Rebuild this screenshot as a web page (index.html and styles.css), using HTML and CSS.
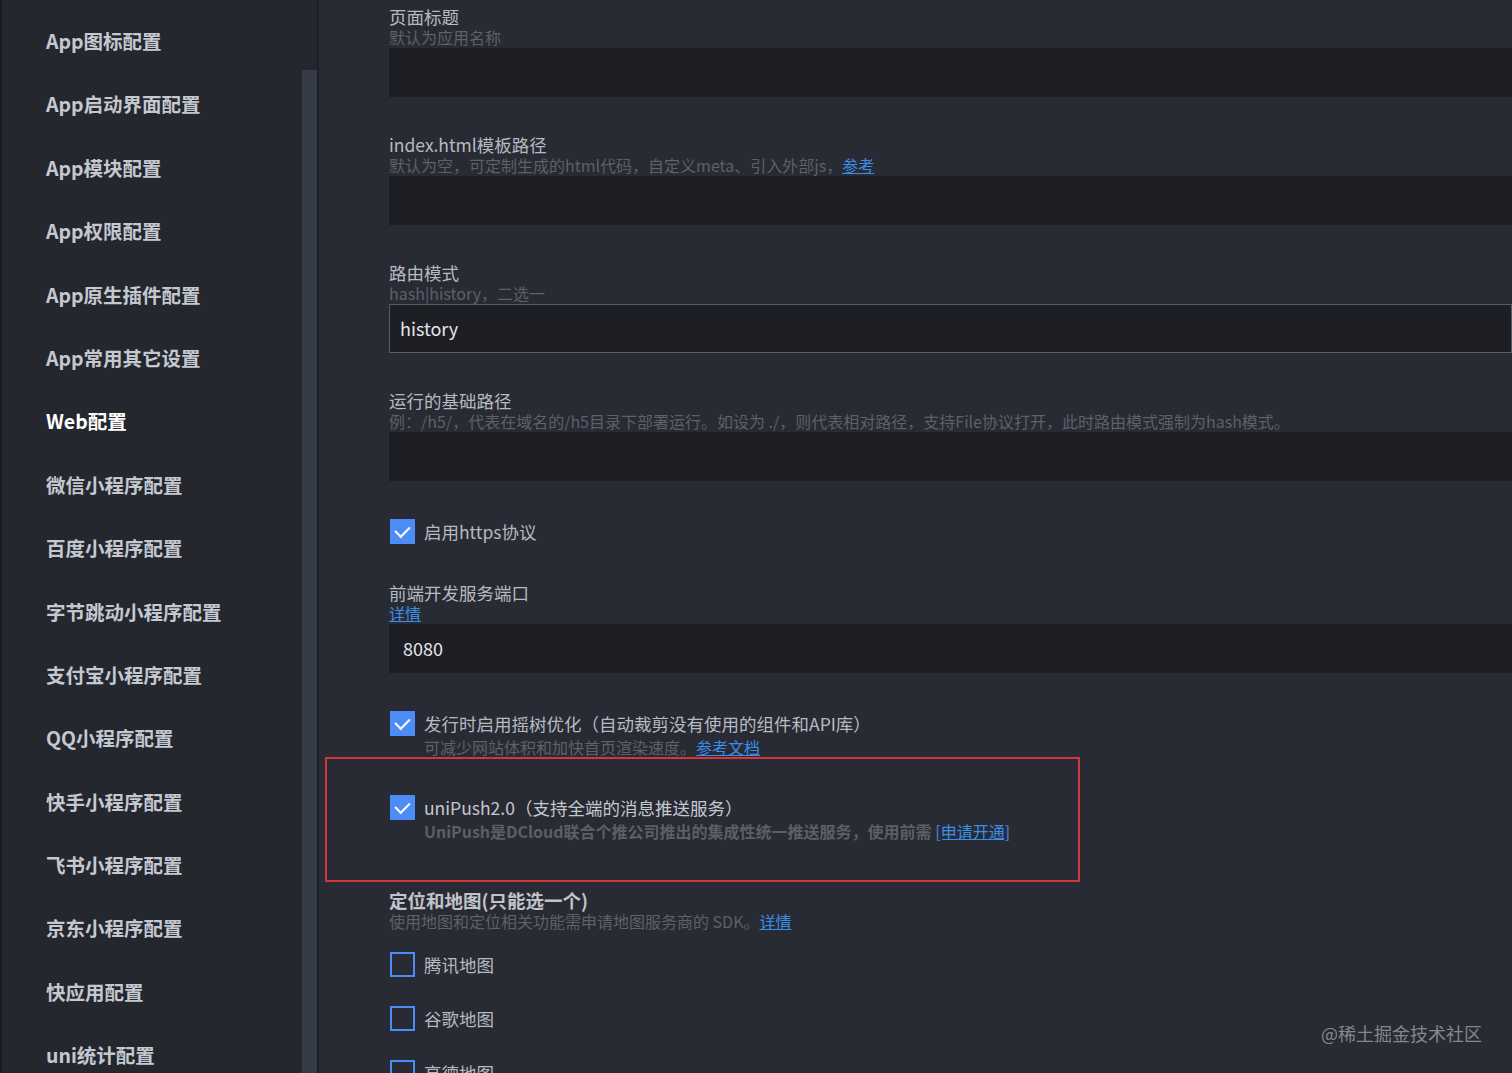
FILE: index.html
```html
<!DOCTYPE html>
<html>

<head>
    <meta charset="utf-8" />
    <title>manifest.json - Web配置</title>
    <link rel="stylesheet" href="styles.css">
</head>

<body>
    <div class="sidebar">
        <ul class="menu">
            <li>App图标配置</li>
            <li>App启动界面配置</li>
            <li>App模块配置</li>
            <li>App权限配置</li>
            <li>App原生插件配置</li>
            <li>App常用其它设置</li>
            <li class="active">Web配置</li>
            <li>微信小程序配置</li>
            <li>百度小程序配置</li>
            <li>字节跳动小程序配置</li>
            <li>支付宝小程序配置</li>
            <li>QQ小程序配置</li>
            <li>快手小程序配置</li>
            <li>飞书小程序配置</li>
            <li>京东小程序配置</li>
            <li>快应用配置</li>
            <li>uni统计配置</li>
        </ul>
        <div class="scroll-track">
            <div class="scroll-thumb"></div>
        </div>
    </div>

    <div class="main">
        <div class="field">
            <div class="label">页面标题</div>
            <div class="hint">默认为应用名称</div>
            <div class="input"></div>
        </div>

        <div class="field">
            <div class="label">index.html模板路径</div>
            <div class="hint">默认为空，可定制生成的html代码，自定义meta、引入外部js，<a href="#">参考</a></div>
            <div class="input"></div>
        </div>

        <div class="field">
            <div class="label">路由模式</div>
            <div class="hint">hash|history，二选一</div>
            <div class="input focused">history</div>
        </div>

        <div class="field">
            <div class="label">运行的基础路径</div>
            <div class="hint">例：/h5/，代表在域名的/h5目录下部署运行。如设为 ./，则代表相对路径，支持File协议打开，此时路由模式强制为hash模式。</div>
            <div class="input"></div>
        </div>

        <div class="check-row">
            <span class="box checked"></span>
            <span class="check-label">启用https协议</span>
        </div>

        <div class="field">
            <div class="label">前端开发服务端口</div>
            <div class="hint"><a href="#">详情</a></div>
            <div class="input port">8080</div>
        </div>

        <div class="check-row">
            <span class="box checked"></span>
            <span class="check-label">发行时启用摇树优化（自动裁剪没有使用的组件和API库）</span>
        </div>
        <div class="hint sub">可减少网站体积和加快首页渲染速度。<a href="#">参考文档</a></div>

        <div class="highlight">
            <div class="check-row">
                <span class="box checked"></span>
                <span class="check-label bright">uniPush2.0（支持全端的消息推送服务）</span>
            </div>
            <div class="hint sub strong">UniPush是DCloud联合个推公司推出的集成性统一推送服务，使用前需 <a href="#">[申请开通]</a></div>
        </div>

        <div class="section-title">定位和地图(只能选一个)</div>
        <div class="hint">使用地图和定位相关功能需申请地图服务商的 SDK。<a href="#">详情</a></div>

        <div class="map-list">
            <div class="check-row">
                <span class="box"></span>
                <span class="check-label">腾讯地图</span>
            </div>
            <div class="check-row">
                <span class="box"></span>
                <span class="check-label">谷歌地图</span>
            </div>
            <div class="check-row">
                <span class="box"></span>
                <span class="check-label">高德地图</span>
            </div>
        </div>
    </div>

    <div class="watermark">@稀土掘金技术社区</div>
</body>

</html>
```

FILE: styles.css
```css
* {
    box-sizing: border-box;
    padding: 0;
    margin: 0;
}

body {
    width: 100vw;
    height: 100vh;
    overflow: hidden;
    display: flex;
    background-color: #282b34;
    font-family: "Noto Sans CJK SC", "Noto Sans", sans-serif;
}

/* left menu */
.sidebar {
    width: 319px;
    flex-shrink: 0;
    display: flex;
    background-color: #25272e;
    border-left: 2px solid #1b1c21;
    border-right: 2px solid #1e2026;
}

.menu {
    flex: 1;
    list-style: none;
    padding-top: 9px;
    padding-left: 44px;
}

.menu li {
    height: 63.4px;
    line-height: 63.4px;
    font-size: 19.5px;
    font-weight: bold;
    color: #c3c8d1;
    white-space: nowrap;
}

.menu li.active {
    color: #ffffff;
}

.scroll-track {
    width: 15px;
    padding-top: 70px;
}

.scroll-thumb {
    height: 100%;
    background-color: #363c47;
}

/* right form */
.main {
    flex: 1;
    min-width: 0;
    padding-top: 6px;
    padding-left: 70px;
    color: #b7bac1;
}

.field {
    margin-bottom: 37px;
}

.label {
    font-size: 17.5px;
    line-height: 21px;
    white-space: nowrap;
}

.hint {
    font-size: 16px;
    line-height: 21px;
    color: #5d6168;
    white-space: nowrap;
}

.hint a {
    color: #3a8ee6;
}

.input {
    height: 49px;
    background-color: #1d1f24;
    font-size: 18px;
    line-height: 49px;
    padding-left: 11px;
    color: #e4e6ea;
}

.input.focused {
    border: 1px solid #575c66;
    line-height: 47px;
    padding-left: 10px;
}

.input.port {
    padding-left: 14px;
}

.check-row {
    display: flex;
    align-items: center;
    height: 27px;
    gap: 9px;
    padding-left: 1px;
}

.box {
    width: 25px;
    height: 25px;
    border: 2px solid #4c8cf5;
    flex-shrink: 0;
    position: relative;
}

.box.checked {
    background-color: #4c8cf5;
}

.box.checked::after {
    content: "";
    position: absolute;
    left: 6px;
    top: 2px;
    width: 7px;
    height: 12px;
    border-right: 2.5px solid #ffffff;
    border-bottom: 2.5px solid #ffffff;
    transform: rotate(45deg);
}

.check-label {
    font-size: 17.5px;
    color: #b7bac1;
    white-space: nowrap;
}

.check-label.bright {
    color: #c4c8cf;
}

.hint.sub {
    padding-left: 35px;
}

.hint.strong {
    font-weight: bold;
    color: #5b5f66;
}

.hint.strong a {
    font-weight: normal;
}

.main > .check-row {
    margin-bottom: 37px;
}

.main > .check-row:has(+ .hint) {
    margin-bottom: 0;
}

.highlight {
    width: 755px;
    margin-left: -64px;
    margin-top: -1px;
    padding: 35px 0 38px 62px;
    border: 2px solid #d4353d;
}

.section-title {
    margin-top: 7px;
    font-size: 18.5px;
    font-weight: bold;
    line-height: 22px;
    color: #c0c3c9;
}

.map-list {
    margin-top: 19px;
    display: flex;
    flex-direction: column;
    gap: 27px;
}

.watermark {
    position: absolute;
    right: 30px;
    top: 1021px;
    font-size: 18px;
    line-height: 24px;
    color: #84878e;
}
```
